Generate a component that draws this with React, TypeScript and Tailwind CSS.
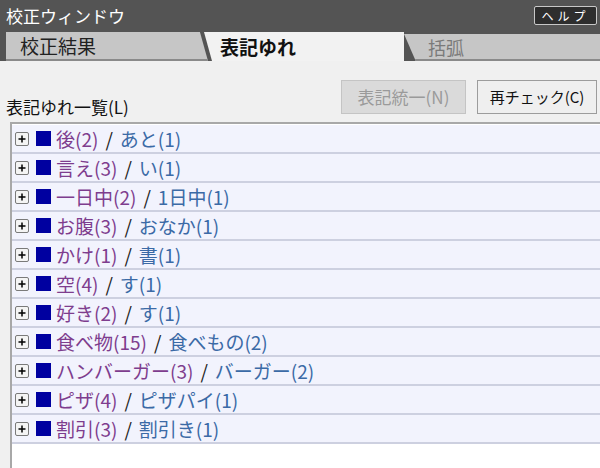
const items: [string, string][] = [
  ['後(2)', 'あと(1)'],
  ['言え(3)', 'い(1)'],
  ['一日中(2)', '1日中(1)'],
  ['お腹(3)', 'おなか(1)'],
  ['かけ(1)', '書(1)'],
  ['空(4)', 'す(1)'],
  ['好き(2)', 'す(1)'],
  ['食べ物(15)', '食べもの(2)'],
  ['ハンバーガー(3)', 'バーガー(2)'],
  ['ピザ(4)', 'ピザパイ(1)'],
  ['割引(3)', '割引き(1)'],
];

const font = "font-['Noto_Sans_CJK_JP','Noto_Sans',sans-serif]";

function PlusBox() {
  return (
    <span className="w-[14px] h-[14px] border border-[#7a7a7a] rounded-[2px] bg-[#f4f4f4] flex items-center justify-center shrink-0">
      <svg width="10" height="10" viewBox="0 0 10 10">
        <path d="M1.5 5h7M5 1.5v7" stroke="#000" strokeWidth="1.5" />
      </svg>
    </span>
  );
}

const App = () => {
  return (
    <div className={`w-[600px] h-[468px] overflow-hidden flex flex-col bg-[#f0f0f0] ${font}`}>
      {/* Title bar */}
      <div className="h-[31px] bg-[#545454] flex items-center justify-between pl-[6px] pr-[3px] shrink-0">
        <span className="text-white text-[17px] leading-none">校正ウィンドウ</span>
        <button className="w-[63px] h-[19px] bg-[#2e2e2e] border border-[#c8c8c8] rounded-[2px] text-white text-[12px] leading-none tracking-[4px] flex items-center justify-center">
          ヘルプ
        </button>
      </div>

      {/* Tabs */}
      <div className="h-[30px] bg-[#545454] flex items-end shrink-0">
        <div className="ml-[6px] w-[202px] h-[29px] bg-[#c6c6c6] border-b-2 border-[#8a8a8a] [clip-path:polygon(0_0,96%_0,100%_100%,0_100%)] flex items-center pl-[14px]">
          <span className="text-[19px] text-[#222] leading-none">校正結果</span>
        </div>
        <div className="-ml-[4px] w-[200px] h-[29px] bg-[#f2f2f2] [clip-path:polygon(0_0,100%_0,100%_100%,4%_100%)] flex items-center pl-[16px]">
          <span className="text-[19px] font-bold text-[#111] leading-none">表記ゆれ</span>
        </div>
        <div className="w-[196px] h-[27px] bg-[#c6c6c6] border-b-2 border-[#8a8a8a] [clip-path:polygon(0_0,100%_0,100%_100%,6%_100%)] flex items-center pl-[24px]">
          <span className="text-[18px] text-[#7a7a7a] leading-none">括弧</span>
        </div>
      </div>

      {/* Toolbar */}
      <div className="flex items-end justify-between pl-[6px] pr-[3px] pt-[19px] h-[61px] shrink-0">
        <span className="text-[17px] text-[#111] leading-none mb-[7px]">表記ゆれ一覧(L)</span>
        <div className="flex gap-[11px] mb-[8px]">
          <button className="w-[125px] h-[34px] bg-[#dadada] border border-[#c4c4c4] text-[17px] text-[#9a9a9a]">
            表記統一(N)
          </button>
          <button className="w-[120px] h-[34px] bg-[#efefef] border border-[#9c9c9c] text-[15px] text-[#111]">
            再チェック(C)
          </button>
        </div>
      </div>

      {/* List */}
      <div className="ml-[10px] flex-1 bg-white border-t-2 border-l-2 border-[#a8a8a8] pt-[1px]">
        {items.map(([a, b], i) => (
          <div
            key={i}
            className="h-[29px] bg-[#f2f3fd] border-b-2 border-[#cdd0e0] flex items-center pl-[3px]"
          >
            <PlusBox />
            <span className="w-[15px] h-[15px] bg-[#0000a0] shrink-0 ml-[7px]" />
            <span className="text-[19px] leading-none text-[#7e3d8e] ml-[5px]">{a}</span>
            <span className="text-[19px] leading-none text-[#222] mx-[7px]">/</span>
            <span className="text-[19px] leading-none text-[#3b6aa6]">{b}</span>
          </div>
        ))}
      </div>
    </div>
  );
};

export default App;
